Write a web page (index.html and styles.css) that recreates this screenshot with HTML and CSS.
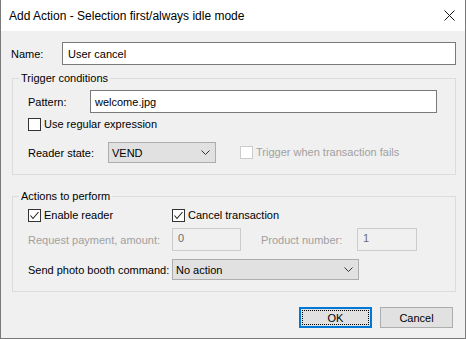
FILE: index.html
```html
<!DOCTYPE html>
<html>
<head>
<meta charset="utf-8">
<link rel="stylesheet" href="styles.css">
</head>
<body>
<div class="window">
  <div class="titlebar">
    <span class="title">Add Action - Selection first/always idle mode</span>
    <svg class="close" width="11" height="11" viewBox="0 0 11 11"><path d="M0.5 0.5 L10.5 10.5 M10.5 0.5 L0.5 10.5" stroke="#1a1a1a" stroke-width="1" fill="none"/></svg>
  </div>
  <div class="client">
    <div class="row name-row">
      <span class="lbl name-lbl">Name:</span>
      <div class="input name-input">User cancel</div>
    </div>

    <fieldset class="group trigger">
      <legend>Trigger conditions</legend>
      <div class="row pattern-row">
        <span class="lbl pattern-lbl">Pattern:</span>
        <div class="input pattern-input">welcome.jpg</div>
      </div>
      <div class="row check-row regex-row">
        <span class="cb"></span>
        <span class="cb-text">Use regular expression</span>
      </div>
      <div class="row select-row reader-row">
        <span class="lbl reader-lbl">Reader state:</span>
        <div class="select reader-select"><span>VEND</span><svg class="chev" width="9" height="5" viewBox="0 0 9 5"><path d="M0.5 0.5 L4.5 4.5 L8.5 0.5" stroke="#333" stroke-width="1" fill="none"/></svg></div>
        <span class="cb disabled fail-cb"></span>
        <span class="cb-text dis-text">Trigger when transaction fails</span>
      </div>
    </fieldset>

    <fieldset class="group actions">
      <legend>Actions to perform</legend>
      <div class="row check-row enable-row">
        <span class="check-item enable-item">
          <span class="cb"><svg width="11" height="11" viewBox="0 0 11 11"><path d="M1.5 5.5 L4 8.5 L9.5 2" stroke="#222" stroke-width="1.1" fill="none"/></svg></span>
          <span class="cb-text">Enable reader</span>
        </span>
        <span class="check-item">
          <span class="cb"><svg width="11" height="11" viewBox="0 0 11 11"><path d="M1.5 5.5 L4 8.5 L9.5 2" stroke="#222" stroke-width="1.1" fill="none"/></svg></span>
          <span class="cb-text">Cancel transaction</span>
        </span>
      </div>
      <div class="row request-row">
        <span class="lbl dis-text request-lbl">Request payment, amount:</span>
        <div class="input disabled-input amount-input">0</div>
        <span class="lbl dis-text product-lbl">Product number:</span>
        <div class="input disabled-input product-input">1</div>
      </div>
      <div class="row select-row photo-row">
        <span class="lbl photo-lbl">Send photo booth command:</span>
        <div class="select photo-select"><span>No action</span><svg class="chev" width="9" height="5" viewBox="0 0 9 5"><path d="M0.5 0.5 L4.5 4.5 L8.5 0.5" stroke="#333" stroke-width="1" fill="none"/></svg></div>
      </div>
    </fieldset>

    <div class="buttons">
      <div class="btn btn-default">OK</div>
      <div class="btn">Cancel</div>
    </div>
  </div>
</div>
</body>
</html>
```

FILE: styles.css
```css
* { box-sizing: border-box; }
html, body { margin: 0; padding: 0; }
body {
  width: 466px;
  height: 339px;
  overflow: hidden;
  font-family: "Liberation Sans", Arial, sans-serif;
  font-size: 11px;
  color: #000;
  background: #f0f0f0;
}
.window {
  width: 466px;
  height: 339px;
  border: 1px solid #7a7a7a;
  border-top: none;
  display: flex;
  flex-direction: column;
  background: #f0f0f0;
}
.titlebar {
  height: 31px;
  flex: none;
  background: #fff;
  display: flex;
  align-items: center;
  justify-content: space-between;
  padding: 0 10px 0 8px;
}
.title { font-size: 12px; color: #000; }
.close { display: block; }

.client {
  flex: 1;
  display: flex;
  flex-direction: column;
  padding: 11px 9px 10px 11px;
}
.row { display: flex; align-items: center; }
.lbl { white-space: nowrap; }

.name-row { height: 23px; }
.name-lbl { width: 51px; margin-left: -1px; }
.input {
  height: 23px;
  border: 1px solid #7a7a7a;
  background: #fff;
  display: flex;
  align-items: center;
  padding-left: 5px;
}
.name-input { flex: 1; }

.group {
  margin: 0;
  border: 1px solid #dcdcdc;
  min-width: 0;
}
.group legend {
  padding: 0 2px;
  margin-left: -9px;
  height: 15px;
  line-height: 15px;
}
.trigger { margin-top: 6px; padding: 4px 18px 11px 15px; }
.actions { margin-top: 14px; padding: 5px 18px 11px 15px; }

.pattern-row { height: 23px; }
.pattern-lbl { width: 62px; }
.pattern-input { flex: 1; padding-left: 4px; }

.check-row { height: 13px; }
.regex-row { margin-top: 5px; }
.cb {
  width: 13px;
  height: 13px;
  flex: none;
  border: 1px solid #333;
  background: #fff;
  display: flex;
  align-items: center;
  justify-content: center;
}
.cb svg { display: block; }
.cb.disabled { border-color: #cccccc; }
.cb-text { margin-left: 3px; line-height: 13px; white-space: nowrap; }
.dis-text { color: #a0a0a0; }

.select-row { height: 21px; }
.reader-row { margin-top: 11px; }
.reader-lbl { width: 80px; }
.select {
  height: 21px;
  background: #e1e1e1;
  border: 1px solid #adadad;
  display: flex;
  align-items: center;
  padding: 0 5px 0 3px;
}
.select .chev { margin-left: auto; display: block; }
.reader-select { width: 108px; }
.fail-cb { margin-left: 24px; }

.check-item { display: flex; align-items: center; }
.enable-item { width: 144px; }

.request-row { height: 23px; margin-top: 6px; }
.request-lbl { width: 144px; }
.disabled-input {
  border-color: #cccccc;
  background: #f0f0f0;
  color: #6d6d6d;
  align-items: flex-start;
  padding-top: 3px;
}
.amount-input { width: 69px; }
.product-lbl { margin-left: 20px; width: 96px; }
.product-input { width: 60px; }

.photo-row { margin-top: 8px; }
.photo-lbl { width: 144px; }
.photo-select { width: 187px; }

.buttons {
  display: flex;
  justify-content: flex-end;
  gap: 8px;
  margin-top: 15px;
  padding-right: 3px;
}
.btn {
  width: 73px;
  height: 21px;
  background: #e1e1e1;
  border: 1px solid #adadad;
  display: flex;
  align-items: center;
  justify-content: center;
}
.btn-default {
  border: 2px solid #0078d7;
  position: relative;
}
.btn-default::after {
  content: "";
  position: absolute;
  inset: 1px;
  border: 1px dotted #000;
}
```
